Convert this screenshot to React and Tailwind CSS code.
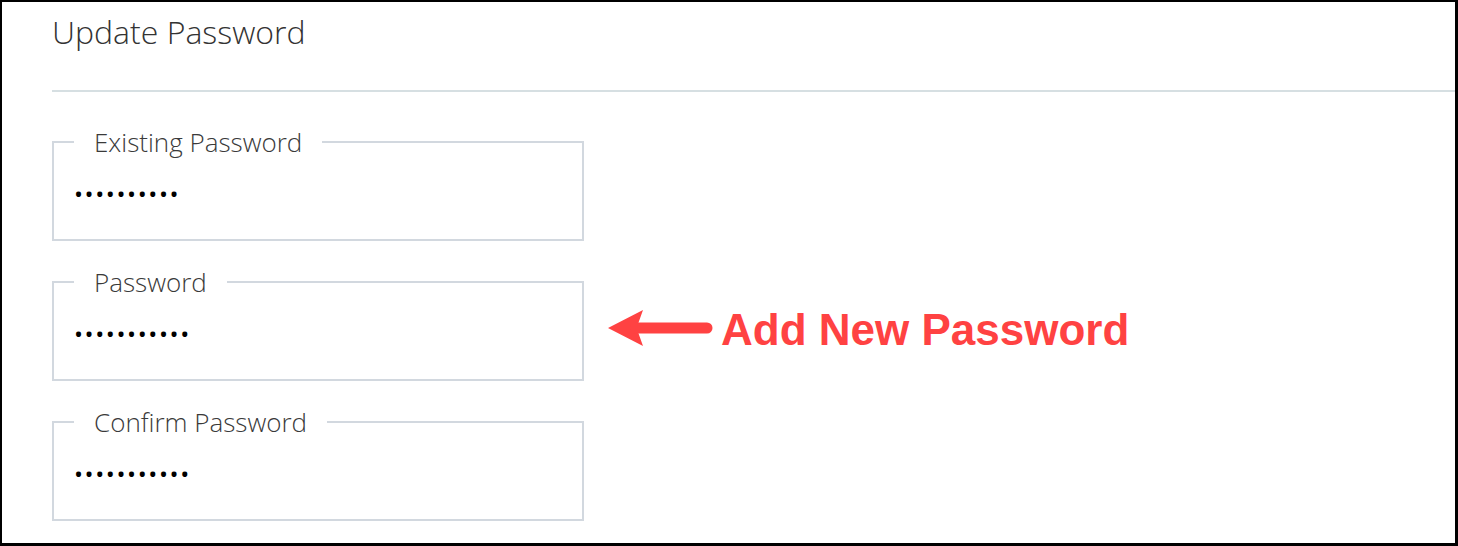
import { useState } from "react";

// One outlined field with a floating legend
function PasswordField({ label, value }) {
  return (
    <fieldset className="w-[532px] h-[115px] border-2 border-[#d2d8df] pl-[20px] pr-4 m-0">
      <legend className="px-[20px] text-[26px] font-light leading-[32px] text-[#3a3a3a]">
        {label}
      </legend>
      <input
        type="password"
        readOnly
        value={value}
        className="w-full mt-[18px] bg-transparent text-[24px] tracking-[1.6px] text-black outline-none font-['Open_Sans',sans-serif]"
      />
    </fieldset>
  );
}

function ArrowLeft() {
  return (
    <svg width="108" height="40" viewBox="0 0 108 40" className="shrink-0">
      <path d="M0 18 L35 0 L30 14 L30 22 L35 36 Z" fill="#ff4242" />
      <line x1="28" y1="18" x2="99" y2="18" stroke="#ff4242" strokeWidth="11" strokeLinecap="round" />
    </svg>
  );
}

export default function App() {
  const [fields] = useState([
    { label: "Existing Password", value: "abcdefghij" },
    { label: "Password", value: "abcdefghijk" },
    { label: "Confirm Password", value: "abcdefghijk" },
  ]);

  return (
    <div className="w-[1458px] h-[546px] bg-white border-t-2 border-l-2 border-r-[3px] border-b-[3px] border-black overflow-hidden font-['Open_Sans',sans-serif]">
      <h1 className="pl-[50px] pt-[10px] text-[32px] font-light leading-[40px] text-[#333]">
        Update Password
      </h1>

      <div className="ml-[50px] mt-[38px] h-[2px] bg-[#d6dfe2]" />

      <div className="pl-[50px] pt-[34px] flex flex-col gap-[25px]">
        {fields.map((f, i) => (
          <div key={f.label} className="flex items-center">
            <PasswordField label={f.label} value={f.value} />
            {i === 1 && (
              <div className="flex items-center ml-[24px] mt-[13px]">
                <ArrowLeft />
                <span className="ml-[5px] text-[44px] font-bold leading-none text-[#ff4242] font-['Liberation_Sans',Arial,sans-serif]">
                  Add New Password
                </span>
              </div>
            )}
          </div>
        ))}
      </div>
    </div>
  );
}
